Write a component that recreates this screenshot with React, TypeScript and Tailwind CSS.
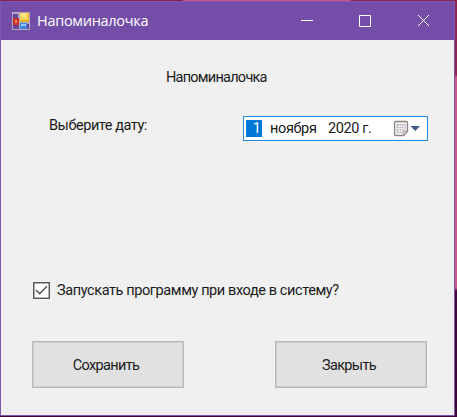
import React from 'react';

function AppIcon() {
  return (
    <svg width="18" height="18" viewBox="0 0 18 18" className="block" shapeRendering="crispEdges">
      <rect width="18" height="18" fill="#b3a9c0" />
      <rect x="1" y="2" width="5" height="4" fill="#66459b" />
      <rect x="1" y="13" width="6" height="4" fill="#66459b" />
      <rect x="15" y="12" width="2" height="5" fill="#66459b" />
      <rect x="1" y="6" width="6" height="7" fill="#c93120" />
      <rect x="3" y="8" width="2" height="3" fill="#ee8068" />
      <rect x="8" y="1" width="9" height="9" fill="#e5ae27" />
      <rect x="8" y="1" width="8" height="7" fill="#fbd350" />
      <rect x="9" y="2" width="5" height="3" fill="#ffe995" />
      <rect x="8" y="11" width="7" height="6" fill="#4289e4" />
      <rect x="9" y="12" width="5" height="2" fill="#92c7fa" />
    </svg>
  );
}

function CalendarIcon() {
  return (
    <svg width="28" height="18" viewBox="0 0 28 18" className="block">
      <path d="M2.5 1.5h11q1 0 1 1v9l-4 4h-8q-1 0-1-1v-12q0-1 1-1z" fill="#f3f1f0" stroke="#8f8683" strokeWidth="1.3" />
      <path d="M14.5 11.5h-3q-1 0-1 1v3z" fill="#d8d2cf" stroke="#8f8683" strokeWidth="0.8" />
      <path d="M3.5 4h9v7h-2v2h-7z" fill="#b9bcc3" />
      <path d="M4 6.2h8M4 8.6h8M4 11h6M6.2 4.5v8M8.7 4.5v8M11 4.5v6" stroke="#fff" strokeWidth="0.7" />
      <path d="M17.5 6h9.5l-4.7 5z" fill="#45598a" />
    </svg>
  );
}

function FormButton({ children }: { children: React.ReactNode }) {
  return (
    <button className="flex h-[47px] w-[152px] items-center justify-center border border-solid border-[#b9b9b9] bg-[#e1e1e1] pr-[4px] pt-[2px] shadow-[inset_0_0_0_1px_#cdcdcd]">
      {children}
    </button>
  );
}

export default function App() {
  return (
    <div className="h-[417px] w-[457px] overflow-hidden bg-[linear-gradient(to_bottom,#8f2352_0px,#8f2352_75px,#c9578a_77px,#c9578a_288px,#440a3d_291px,#3d0637_417px)] font-['Roboto','Liberation_Sans',sans-serif]">
      <div className="flex h-px">
        <div className="w-[183px] bg-[#84204b]" />
        <div className="w-[168px] bg-[#cf4f83]" />
        <div className="flex-1 bg-[#8f2352]" />
      </div>
      <div className="flex h-[415px] w-[455px] flex-col border border-[#7c57ae] bg-[#f0f0f0]">
        <header className="flex h-[38px] shrink-0 items-center bg-[#744da9] pl-[11px] text-white">
          <AppIcon />
          <h1 className="ml-[7px] w-[250px] whitespace-nowrap font-['Open_Sans','Noto_Sans',sans-serif] text-[14.5px] leading-5 tracking-[-0.28px]">Напоминалочка</h1>
          <svg width="130" height="14" viewBox="0 0 130 14" className="ml-[14px] block" fill="none" stroke="white">
            <path d="M0 6.5h12M58.5 1.5h11v11h-11zM117 1l11 11M128 1l-11 11" />
          </svg>
        </header>
        <main className="text-[14.5px] leading-5 text-[#1a1a1a]">
          <h2 className="ml-[165px] mt-[28px] whitespace-nowrap tracking-[-0.75px]">Напоминалочка</h2>
          <div className="mt-[28px] flex">
            <label className="w-[195px] whitespace-nowrap pl-[48px] tracking-[-0.45px]">Выберите дату:</label>
            <div className="ml-[47px] flex h-[25px] w-[185px] items-center whitespace-nowrap border border-solid border-[#2488dc] bg-white pl-[2px]">
              <span className="flex h-[17px] w-[16px] items-center justify-end bg-[#0078d7] pr-px pt-px text-white">1</span>
              <span className="ml-[8px] w-[58px] pt-px tracking-[-0.35px]">ноября</span>
              <span className="w-[65px] pt-px tracking-[-0.4px]">2020 г.</span>
              <CalendarIcon />
            </div>
          </div>
          <label className="ml-[32px] mt-[139px] flex items-center">
            <svg width="17" height="17" viewBox="0 0 17 17" className="block">
              <rect x="0.75" y="0.75" width="15.5" height="15.5" fill="#fff" stroke="#444" strokeWidth="1.3" />
              <path d="M3 8l3.7 3.7L14 4.3" fill="none" stroke="#555" strokeWidth="1.6" />
            </svg>
            <span className="ml-[7px] whitespace-nowrap pt-px tracking-[-0.4px]">Запускать программу при входе в систему?</span>
          </label>
          <div className="ml-[31px] mt-[40px] flex gap-[91px] tracking-[-0.65px]">
            <FormButton>Сохранить</FormButton>
            <FormButton>Закрыть</FormButton>
          </div>
        </main>
      </div>
    </div>
  );
}
